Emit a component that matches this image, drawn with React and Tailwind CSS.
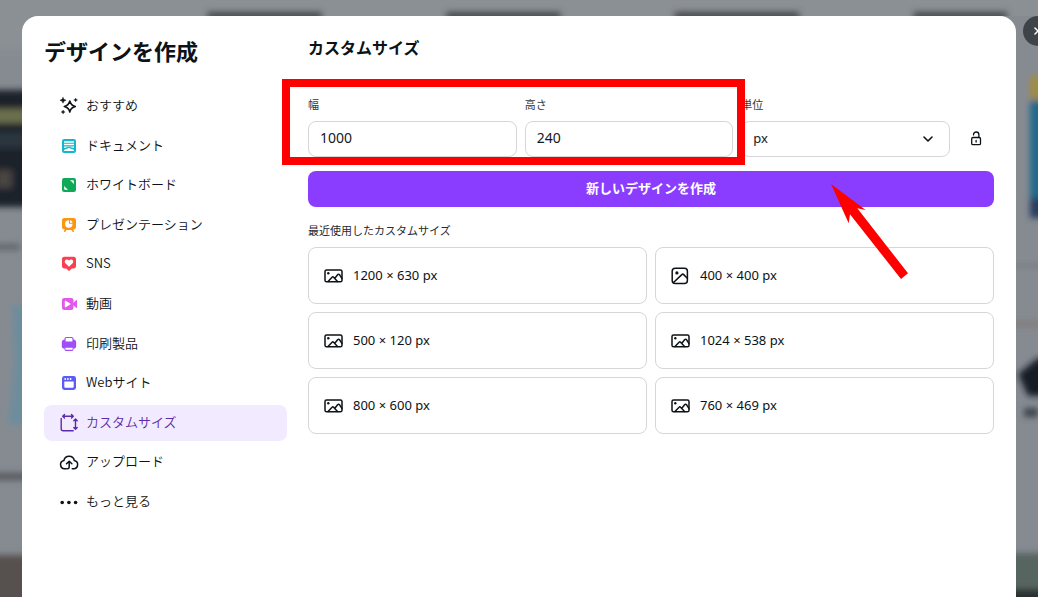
import React, { useState } from 'react';
import { ChevronDown, X } from 'lucide-react';

const SparkleIcon = () => (
  <svg viewBox="0 0 18 18" className="size-[18px] shrink-0 overflow-visible" aria-hidden="true">
    <path
      d="M9.800 4c.8 3.300 2.100 4.700 5.500 5.500-3.400.8-4.700 2.200-5.500 5.500-.8-3.300-2.100-4.700-5.500-5.500 3.400-.8 4.700-2.200 5.500-5.500z"
      fill="none"
      stroke="currentColor"
      strokeWidth="1.600"
      strokeLinejoin="round"
    />
    <path d="M3 .2c.5 1.900 1.100 2.500 3 3-1.900.5-2.500 1.100-3 3-.5-1.900-1.100-2.500-3-3 1.900-.5 2.500-1.100 3-3z" fill="currentColor" stroke="currentColor" strokeWidth=".5" />
    <path d="M15.700 1c.2 1.200.7 1.700 1.900 1.900-1.200.3-1.700.8-1.900 2-.3-1.200-.8-1.700-2-2 1.200-.2 1.700-.7 2-1.900z" fill="currentColor" stroke="currentColor" strokeWidth=".4" />
    <path d="M3.100 13c.3 1.200.8 1.700 2 2-1.200.3-1.700.8-2 2-.3-1.200-.8-1.700-2-2 1.200-.3 1.700-.8 2-2z" fill="currentColor" stroke="currentColor" strokeWidth=".4" />
  </svg>
);

const DocIcon = () => (
  <svg viewBox="0 0 18 18" className="size-[18px] shrink-0" aria-hidden="true">
    <rect x="2" y="2" width="14" height="14" rx="2.200" fill="#13b6cc" />
    <path d="M4 5h10M4 7.500h10" stroke="#fff" strokeWidth="1.400" />
    <path d="M4 9.400h10v1.500l-2.100-.4L9 9.800l-2.900.700-2.100.4z" fill="#fff" />
    <path d="M4 14v-1l2-1 1.300-.200L9 10.800l1.700 1 1.300.2 2 1v1z" fill="#fff" />
  </svg>
);

const BoardIcon = () => (
  <svg viewBox="0 0 18 18" className="size-[18px] shrink-0" aria-hidden="true">
    <rect x="2" y="2" width="14" height="14" rx="2.200" fill="#0fa958" />
    <path d="M10 4.200h3c.5 0 .8.300.8.800v3l-1.300-1.300c-.1-.8-.4-1.100-1.200-1.200zM8 13.800H5c-.5 0-.8-.3-.8-.8v-3l1.300 1.300c.1.800.4 1.100 1.200 1.200z" fill="#fff" />
  </svg>
);

const SlidesIcon = () => (
  <svg viewBox="0 0 18 18" className="size-[18px] shrink-0" aria-hidden="true">
    <path d="M4.200 2h9.600C15 2 16 3 16 4.200v7.100c0 1.200-1 2.200-2.200 2.200h-.6l1 2.300-1.300.4-1.500-2.100H6.600l-1.500 2.100-1.300-.4 1-2.300h-.6C3 13.500 2 12.500 2 11.300V4.200C2 3 3 2 4.200 2z" fill="#fb9613" />
    <circle cx="8.800" cy="8" r="3.700" fill="#fff" />
    <path d="M9 7.800V3.600c2.600.1 4.400 1.700 4.600 4.200z" fill="#fb9613" />
    <path d="M10 6.800V4.300c1.400.2 2.400 1.100 2.600 2.500z" fill="#fff" />
  </svg>
);

const SnsIcon = () => (
  <svg viewBox="0 0 18 18" className="size-[18px] shrink-0" aria-hidden="true">
    <path d="M4.200 1.800h9.600c1.200 0 2.200 1 2.200 2.200v7.300c0 1.200-1 2.200-2.200 2.200h-2l-2.100 2.100c-.4.400-1 .4-1.400 0l-2.100-2.100h-2C3 13.500 2 12.500 2 11.300V4c0-1.200 1-2.200 2.200-2.200z" fill="#f9404f" />
    <path d="M9 11.800 5.400 8.200C3.400 5.800 6.700 3 9 5.500c2.300-2.500 5.600.3 3.600 2.700z" fill="#fff" />
  </svg>
);

const VideoIcon = () => (
  <svg viewBox="0 0 18 18" className="size-[18px] shrink-0" aria-hidden="true">
    <rect x="2" y="3" width="11.500" height="12" rx="2.200" fill="#e15be8" />
    <path d="M12.500 8.500 16 5.300c.5-.4 1-.1 1 .5v6.400c0 .6-.5.900-1 .5l-3.500-3.200z" fill="#e15be8" />
    <path d="M4.800 6.400c0-.6.500-.9 1-.6l4.300 2.600c.5.300.5.900 0 1.200l-4.300 2.600c-.5.300-1 0-1-.6z" fill="#fff" />
  </svg>
);

const PrintIcon = () => (
  <svg viewBox="0 0 18 18" className="size-[18px] shrink-0" aria-hidden="true">
    <path d="M4.500 3.800C4.500 2.800 5.200 2 6.300 2h5.400c1.100 0 1.800.8 1.800 1.800v.7c1.500 0 2.700 1.200 2.700 2.700v4.300c0 1.100-.8 1.900-1.900 1.900h-.8v.800c0 1-.8 1.800-1.800 1.800H6.300c-1 0-1.800-.8-1.800-1.800v-.8h-.8c-1.100 0-1.900-.8-1.900-1.900V7.200c0-1.500 1.200-2.700 2.700-2.700z" fill="#a04df5" />
    <path d="M5.600 3.600c0-.4.300-.7.700-.7h5.400c.4 0 .7.300.7.700v3H5.600zM5.400 12.800h7.200v1.400c0 .4-.3.600-.6.600H6c-.3 0-.6-.2-.6-.6z" fill="#fff" />
  </svg>
);

const WebIcon = () => (
  <svg viewBox="0 0 18 18" className="size-[18px] shrink-0" aria-hidden="true">
    <rect x="2" y="2" width="14" height="14" rx="2.400" fill="#5a5cf5" />
    <path d="M4.300 7.600h9.400v4.800c0 .8-.6 1.400-1.400 1.400H5.700c-.8 0-1.400-.6-1.400-1.400z" fill="#fff" />
    <g fill="#fff">
      <circle cx="5.200" cy="5" r=".9" />
      <circle cx="7.900" cy="5" r=".9" />
      <circle cx="10.600" cy="5" r=".9" />
    </g>
  </svg>
);

const ResizeIcon = () => (
  <svg viewBox="0 0 18 18" className="size-[18px] shrink-0 overflow-visible" fill="none" stroke="currentColor" strokeWidth="1.400" strokeLinecap="round" strokeLinejoin="round" aria-hidden="true">
    <path d="M1.200 4.500v10.300c0 1.100.9 2 2 2h10" />
    <path d="M2.800 2.300h10.400M4.500.600 2.700 2.300 4.500 4M11.500.600l1.800 1.700L11.500 4" />
    <path d="M15.500 5.200v9.800M13.800 6.800l1.700-1.800 1.700 1.800M13.800 13.400l1.700 1.800 1.700-1.800" />
  </svg>
);

const UploadIcon = () => (
  <svg viewBox="0 0 18 18" className="size-[18px] shrink-0 overflow-visible" fill="none" stroke="currentColor" strokeWidth="1.500" strokeLinecap="round" strokeLinejoin="round" aria-hidden="true">
    <path d="M6.300 15.800H4.500a4.200 4.200 0 0 1-.6-8.300 5.300 5.300 0 0 1 10.400 0 4.200 4.200 0 0 1-.6 8.300h-1.500" />
    <path d="M9.200 8.500v5c0 1.300-.5 2.300-1.700 2.300M6.500 10.800l2.700-2.600 2.700 2.600" />
  </svg>
);

const DotsIcon = () => (
  <svg viewBox="0 0 18 18" className="size-[18px] shrink-0" fill="currentColor" aria-hidden="true">
    <circle cx="2.200" cy="9.500" r="1.800" />
    <circle cx="8.900" cy="9.500" r="1.800" />
    <circle cx="15.600" cy="9.500" r="1.800" />
  </svg>
);

const LandscapeIcon = () => (
  <svg viewBox="0 0 20 20" className="size-5 shrink-0" fill="none" stroke="currentColor" strokeWidth="1.500" strokeLinecap="round" strokeLinejoin="round" aria-hidden="true">
    <rect x="1" y="4" width="17" height="11.800" rx="1.600" />
    <circle cx="4.300" cy="7.200" r="1.200" fill="currentColor" stroke="none" />
    <path d="m4 15.500 4.100-4.300c.5-.5 1-.5 1.500 0l3.900 4.200M10.800 12.300l2.800-3.500c.6-.7 1.400-.7 2 0l2.300 3.600" />
  </svg>
);

const SquareIcon = () => (
  <svg viewBox="0 0 20 20" className="size-5 shrink-0" fill="none" stroke="currentColor" strokeWidth="1.500" strokeLinecap="round" strokeLinejoin="round" aria-hidden="true">
    <rect x="1.200" y="2.300" width="15.200" height="15.200" rx="3" />
    <circle cx="5.900" cy="6.900" r="1.600" fill="currentColor" stroke="none" />
    <path d="m2.500 16.500 8.300-7.900c.6-.6 1.300-.6 1.900 0l3.600 3.600" />
  </svg>
);

const UnlockIcon = () => (
  <svg viewBox="0 0 16 16" className="size-4" fill="none" stroke="currentColor" strokeWidth="1.300" strokeLinecap="round" aria-hidden="true">
    <rect x="3.700" y="6.500" width="8.800" height="7.200" rx="1.300" />
    <path d="M8.100 9.300v1.700M5.500 3.900v-.2a2.700 2.700 0 0 1 5.400 0v2.800" />
  </svg>
);

const navItems = [
  { label: 'おすすめ', icon: SparkleIcon },
  { label: 'ドキュメント', icon: DocIcon },
  { label: 'ホワイトボード', icon: BoardIcon },
  { label: 'プレゼンテーション', icon: SlidesIcon },
  { label: 'SNS', icon: SnsIcon },
  { label: '動画', icon: VideoIcon },
  { label: '印刷製品', icon: PrintIcon },
  { label: 'Webサイト', icon: WebIcon },
  { label: 'カスタムサイズ', icon: ResizeIcon },
  { label: 'アップロード', icon: UploadIcon },
  { label: 'もっと見る', icon: DotsIcon }
];

const recentSizes = [
  [1200, 630],
  [400, 400],
  [500, 120],
  [1024, 538],
  [800, 600],
  [760, 469]
];

// dimmed, out-of-focus page that sits behind the dialog
const Backdrop = () => (
  <div className="absolute inset-0 overflow-hidden bg-[#868b92]" aria-hidden="true">
    <svg className="absolute inset-x-0 top-0 h-4 w-full">
      <defs>
        <filter id="soft" filterUnits="userSpaceOnUse" x="-40" y="-40" width="3000" height="700">
          <feGaussianBlur stdDeviation="3" />
        </filter>
      </defs>
      <rect width="100%" height="16" fill="#8b9094" />
      <g filter="url(#soft)" fill="#45494c">
        <rect x="20%" y="12" width="11%" height="8" />
        <rect x="43%" y="12" width="11%" height="8" />
        <rect x="65%" y="12" width="12%" height="8" />
        <rect x="88%" y="12" width="9%" height="8" />
      </g>
    </svg>
    <svg className="absolute top-0 left-0 h-[600px] w-[30px]">
      <g filter="url(#soft)">
        <rect x="-20" y="-20" width="70" height="70" fill="#8b9094" />
        <rect x="-20" y="90" width="70" height="117" fill="#1b2229" />
        <rect x="-20" y="109" width="70" height="14" fill="#6c6f4d" />
        <rect x="-20" y="132" width="70" height="16" fill="#2b363c" />
        <rect x="-4" y="170" width="16" height="18" fill="#4a4543" />
        <rect x="-20" y="244" width="40" height="6" fill="#5f6468" />
        <path d="M12 305h20v120H8l6-60z" fill="#6d8d9c" />
        <rect x="-20" y="473" width="50" height="7" fill="#54585c" />
        <rect x="-20" y="555" width="70" height="60" fill="#56514f" />
      </g>
    </svg>
    <svg className="absolute top-0 right-0 h-[600px] w-[22px]">
      <g filter="url(#soft)">
        <rect x="14" y="76" width="30" height="24" fill="#a08c42" />
        <rect x="14" y="100" width="30" height="98" fill="#23698c" />
        <rect x="14" y="198" width="30" height="20" fill="#263c61" />
        <rect x="-10" y="264" width="60" height="3" fill="#72777c" />
        <rect x="-10" y="320" width="60" height="8" fill="#827f80" />
        <path d="M2 374 22 358h20v38H12z" fill="#141a28" />
        <rect x="8" y="408" width="14" height="9" fill="#3e434b" />
        <rect x="-10" y="553" width="60" height="36" fill="#566561" />
        <rect x="-10" y="589" width="60" height="20" fill="#2b3230" />
      </g>
    </svg>
  </div>
);

const Field = ({ id, label, children }) => (
  <div className="min-w-0">
    <label htmlFor={id} className="mb-[10px] block text-[11px] leading-[14px] text-[#35373b]">
      {label}
    </label>
    {children}
  </div>
);

const App = () => {
  const [active, setActive] = useState('カスタムサイズ');
  const [size, setSize] = useState({ width: '1000', height: '240' });
  const [unit, setUnit] = useState('px');

  const handleChange = (e) => {
    const { name, value } = e.target;
    setSize(prev => ({ ...prev, [name]: value }));
  };

  const inputClass =
    "block h-9 w-full rounded-lg border border-[#d5d6d9] bg-white px-[11px] pb-[3px] font-['Noto_Sans',sans-serif] text-[14px] text-[#15181d] outline-none focus:border-[#8b3dff]";

  return (
    <div className="relative flex min-h-screen flex-col overflow-hidden px-[22px] pt-4 font-['Noto_Sans_CJK_JP',sans-serif] text-[#0d1216]">
      <Backdrop />

      <button
        type="button"
        aria-label="閉じる"
        className="absolute top-4 -right-[15px] flex size-[30px] items-center justify-center rounded-full bg-[#3f444a] text-white"
      >
        <X className="size-3" strokeWidth={3} />
      </button>

      <div
        role="dialog"
        aria-labelledby="dialog-title"
        className="relative flex flex-1 gap-[21px] rounded-t-2xl bg-white px-[22px] pt-[22px]"
      >
        <aside className="w-[243px] shrink-0">
          <h1 id="dialog-title" className="text-[22px] leading-6 font-bold">
            デザインを作成
          </h1>
          <nav className="mt-[26px] flex h-[432px] flex-col justify-between">
            {navItems.map(({ label, icon: Icon }) => (
              <button
                key={label}
                type="button"
                onClick={() => setActive(label)}
                className={
                  active === label
                    ? 'flex h-9 items-center gap-2 rounded-lg bg-[#f2eafe] px-4 text-[13px] font-[350] text-[#5c2ba8]'
                    : 'flex h-9 items-center gap-2 rounded-lg px-4 text-[13px] font-[350]'
                }
              >
                <Icon />
                <span className="pb-[2px] leading-5">{label}</span>
              </button>
            ))}
          </nav>
        </aside>

        <main className="min-w-0 flex-1">
          <h2 className="text-[16px] leading-[18px] font-bold">カスタムサイズ</h2>

          <form onSubmit={(e) => e.preventDefault()} className="mt-[41px]">
            <div className="relative flex items-end gap-2">
              <div className="grid min-w-0 flex-1 grid-cols-3 gap-2">
                <Field id="width" label="幅">
                  <input id="width" name="width" value={size.width} onChange={handleChange} className={inputClass} />
                </Field>
                <Field id="height" label="高さ">
                  <input id="height" name="height" value={size.height} onChange={handleChange} className={inputClass} />
                </Field>
                <Field id="unit" label="単位">
                  <div className="relative">
                    <select
                      id="unit"
                      value={unit}
                      onChange={(e) => setUnit(e.target.value)}
                      className="block h-9 w-full appearance-none rounded-lg border border-[#d5d6d9] bg-white px-[11px] font-['Noto_Sans',sans-serif] text-[13px] text-[#15181d] outline-none focus:border-[#8b3dff]"
                    >
                      <option value="px">px</option>
                      <option value="in">in</option>
                      <option value="mm">mm</option>
                      <option value="cm">cm</option>
                    </select>
                    <ChevronDown className="pointer-events-none absolute top-[10px] right-[14px] size-4" strokeWidth={2.4} />
                  </div>
                </Field>
              </div>
              <button type="button" aria-label="縦横比をロック" className="flex size-9 shrink-0 items-center justify-center">
                <UnlockIcon />
              </button>

              <div className="pointer-events-none absolute -top-[18px] -bottom-2 -left-[26px] w-[463px] border-8 border-[#fe0000]" />
              <svg
                viewBox="0 0 80 98"
                className="pointer-events-none absolute top-[86px] left-[521px] z-10 h-[98px] w-[80px]"
                aria-hidden="true"
              >
                <path d="M2 1 36.700 27l-8.400-1.700L79 90.300 72 96 21 31.300l-1.300 9z" fill="#fe0000" />
              </svg>
            </div>

            <button
              type="submit"
              className="mt-[14px] block h-9 w-full rounded-lg bg-[#8b3dff] pb-[2px] text-[13px] font-bold text-white"
            >
              新しいデザインを作成
            </button>
          </form>

          <h3 className="mt-4 text-[11px] leading-[14px] text-[#26292e]">最近使用したカスタムサイズ</h3>
          <div className="mt-[10px] grid grid-cols-2 gap-2">
            {recentSizes.map(([w, h]) => (
              <button
                key={`${w}x${h}`}
                type="button"
                className="flex h-[57px] items-center gap-[9px] rounded-lg border border-[#d5d6d9] px-[15px] font-['Noto_Sans',sans-serif] text-[13px]"
              >
                {w === h ? <SquareIcon /> : <LandscapeIcon />}
                <span className="pb-[2px] leading-5">{w} × {h} px</span>
              </button>
            ))}
          </div>
        </main>
      </div>
    </div>
  );
};

export default App;
